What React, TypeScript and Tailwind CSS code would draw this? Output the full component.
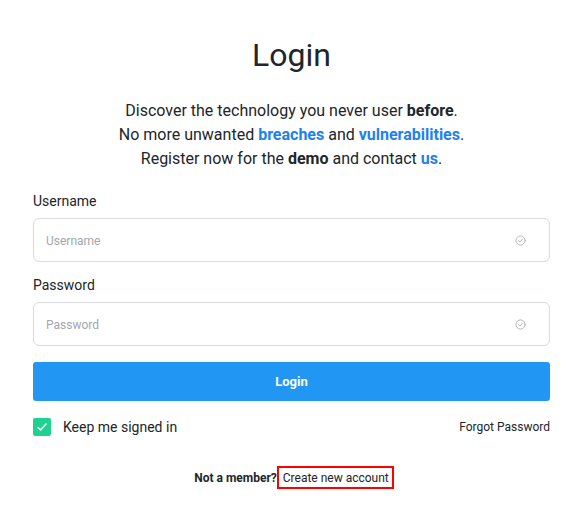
import React from "react";

function CheckCircle() {
  return (
    <svg width="11" height="11" viewBox="0 0 24 24" fill="none" stroke="#b0b0b0" strokeWidth="2" strokeLinecap="round" strokeLinejoin="round">
      <circle cx="12" cy="12" r="10" />
      <path d="M8 12.5l3 3 5-6" />
    </svg>
  );
}

export default function App() {
  return (
    <div className="w-[584px] h-[511px] bg-white text-[#212529]" style={{ fontFamily: "Roboto, 'Liberation Sans', sans-serif" }}>
      <div className="pl-[33px] pr-[34px] pt-[36px] w-[584px]">
        <h1 className="text-center text-[32px] leading-[38px] font-normal text-[#212529]">Login</h1>
        <p className="mt-[25px] text-center text-[16px] leading-[24px] text-[#212529]">
          Discover the technology you never user <b className="font-bold">before</b>.
          <br />
          No more unwanted <span className="font-bold text-[#1a82f0]">breaches</span> and{" "}
          <span className="font-bold text-[#1a82f0]">vulnerabilities</span>.
          <br />
          Register now for the <b className="font-bold">demo</b> and contact <span className="font-bold text-[#1a82f0]">us</span>.
        </p>

        <div className="mt-[20px] text-[14px] leading-[20px]">Username</div>
        <div className="mt-[7px] h-[44px] border border-[#d7dbe0] rounded-[6px] flex items-center justify-between pl-[12px] pr-[23px]">
          <span className="text-[12px] leading-[16px] pt-[1px] text-[#a2a6ab]">Username</span>
          <CheckCircle />
        </div>

        <div className="mt-[13px] text-[14px] leading-[20px]">Password</div>
        <div className="mt-[7px] h-[44px] border border-[#d7dbe0] rounded-[6px] flex items-center justify-between pl-[12px] pr-[23px]">
          <span className="text-[12px] leading-[16px] pt-[1px] text-[#a2a6ab]">Password</span>
          <CheckCircle />
        </div>

        <button className="mt-[16px] w-full h-[39px] rounded-[3px] bg-[#2196f3] text-white text-[13px] font-bold flex items-center justify-center">
          Login
        </button>

        <div className="mt-[16px] flex items-center justify-between">
          <div className="flex items-center">
            <div className="w-[18px] h-[18px] rounded-[2px] bg-[#1ed38f] flex items-center justify-center">
              <svg width="12" height="12" viewBox="0 0 24 24" fill="none" stroke="white" strokeWidth="3" strokeLinecap="round" strokeLinejoin="round">
                <path d="M4 13l5 5L20 6" />
              </svg>
            </div>
            <span className="ml-[12px] text-[14px] leading-[20px]">Keep me signed in</span>
          </div>
          <span className="text-[12px] leading-[20px]">Forgot Password</span>
        </div>

        <div className="mt-[29px] pl-[5px] flex items-center justify-center text-[12px]">
          <span className="font-bold">Not a member?</span>
          <span className="border-2 border-[#ff0000] pl-[4px] pr-[3px] h-[23px] flex items-center">Create new account</span>
        </div>
      </div>
    </div>
  );
}
